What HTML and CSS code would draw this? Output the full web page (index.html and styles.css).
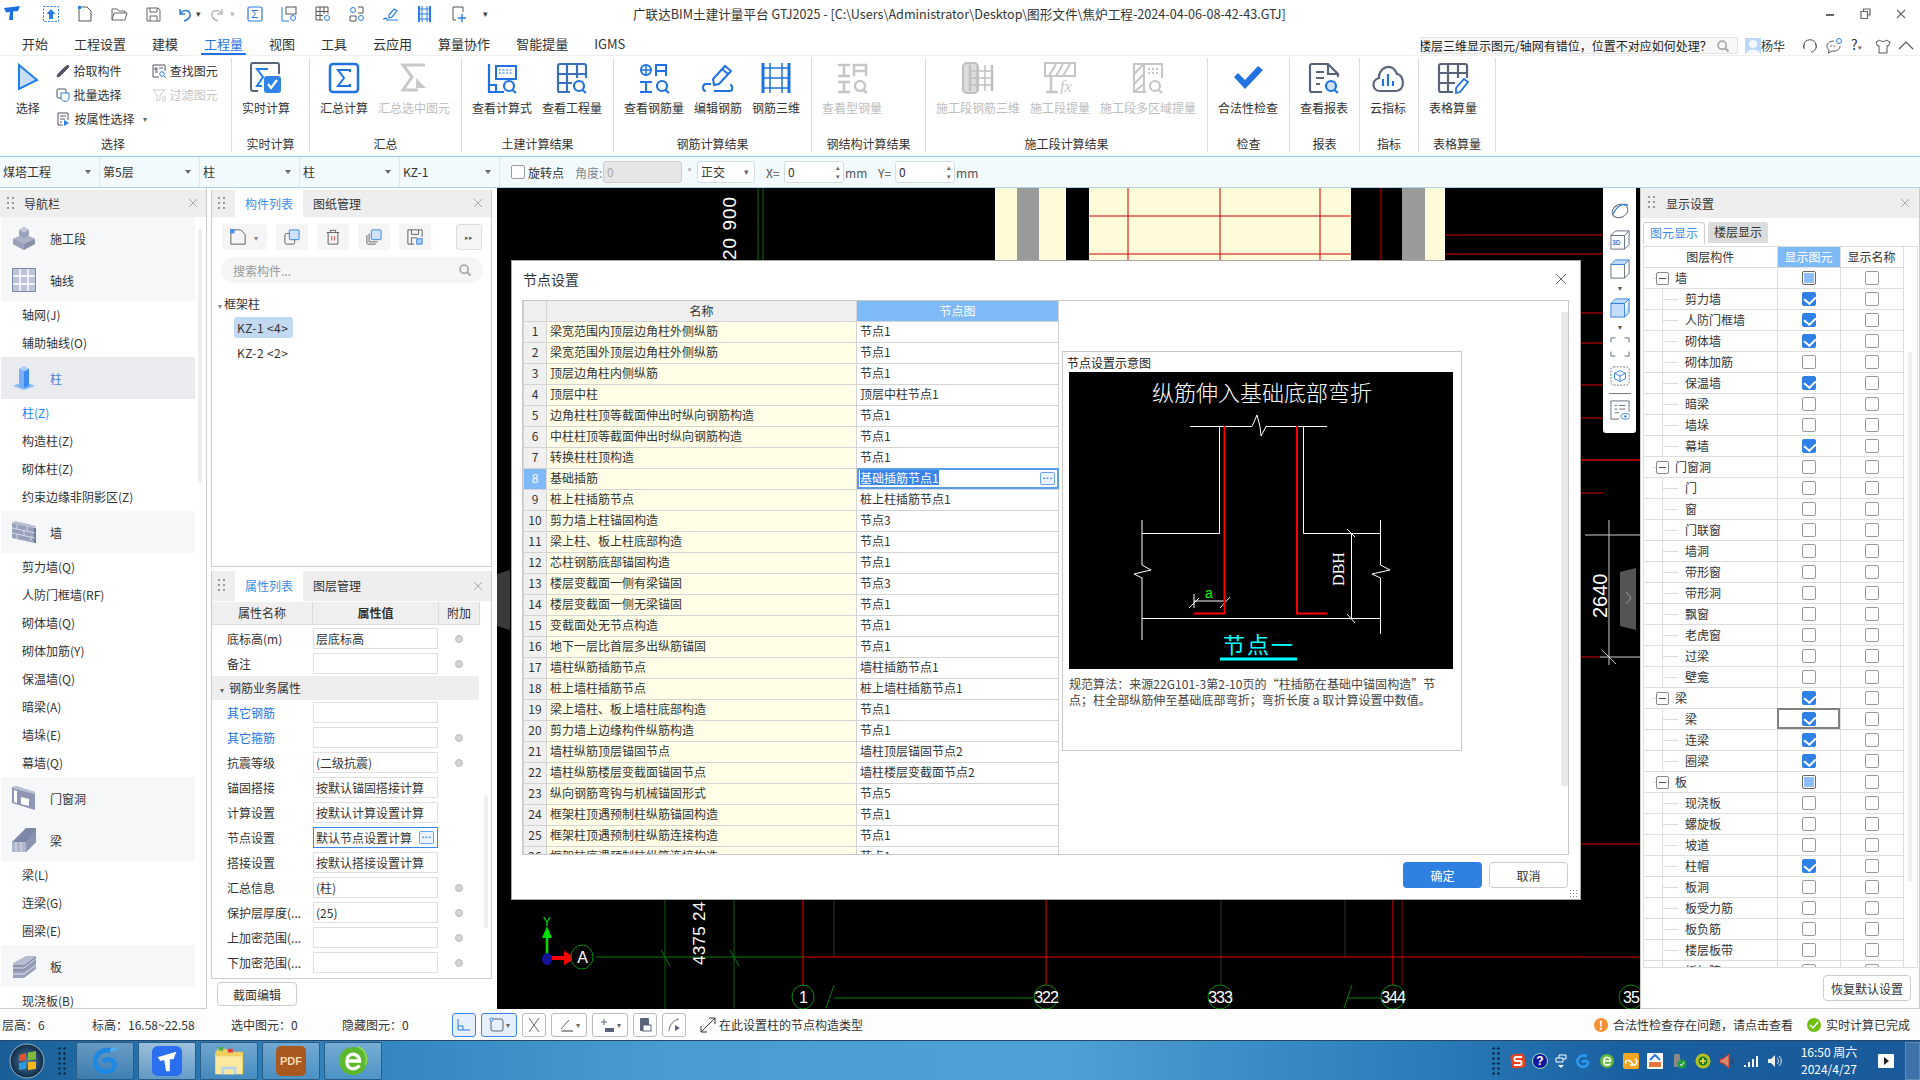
FILE: index.html
```html
<!DOCTYPE html>
<html lang="zh-CN">
<head>
<meta charset="utf-8">
<title>GTJ2025</title>
<link rel="stylesheet" href="styles.css">
</head>
<body>
<svg class="defs" width="0" height="0" aria-hidden="true">
  <symbol id="q" viewBox="0 0 10 10"><circle cx="4.3" cy="4.3" r="3.4" fill="none" stroke="currentColor" stroke-width="1.5"/><path d="M6.8 6.8L9.6 9.6" stroke="currentColor" stroke-width="1.7"/></symbol>
  <symbol id="x" viewBox="0 0 10 10"><path d="M1 1L9 9M9 1L1 9" stroke="#aaa" stroke-width="1"/></symbol>
  <symbol id="grip" viewBox="0 0 8 14"><g fill="#999"><rect x="0" y="0" width="2" height="2"/><rect x="5" y="0" width="2" height="2"/><rect x="0" y="5" width="2" height="2"/><rect x="5" y="5" width="2" height="2"/><rect x="0" y="10" width="2" height="2"/><rect x="5" y="10" width="2" height="2"/></g></symbol>
</svg>
<div class="app">

  <header class="titlebar">
    <svg class="logo" viewBox="0 0 18 18"><path d="M1 3L17 1L15 6L10 6.500L10 15L6 15L7 7L3 7.500Z" fill="#1d6fe0"/></svg>
    <svg class="qa" viewBox="0 0 18 18"><rect x="1.500" y="1.500" width="15" height="15" fill="none" stroke="#2a7de1" stroke-dasharray="2 1.500"/><path d="M9 4L13.500 9H11V14H7V9H4.500Z" fill="#2a7de1"/></svg>
    <svg class="qa" viewBox="0 0 18 18"><path d="M3 2H11L15 6V16H3Z" fill="none" stroke="#555"/><rect x="2" y="1" width="3" height="3" fill="#2a7de1"/></svg>
    <svg class="qa" viewBox="0 0 18 18"><path d="M2 15V4H7L9 6H15V8M2 15L4 8H17L15 15Z" fill="none" stroke="#666"/></svg>
    <svg class="qa qs" viewBox="0 0 18 18"><path d="M3 3H14L16 5V16H3ZM6 3V7H13V3M6 16V11H13V16" fill="none" stroke="#666"/></svg>
    <svg class="qa qu" viewBox="0 0 18 18"><path d="M5 4V9H10M5 9C7 5 14 4 15 9C15.500 13 12 15 9 16" fill="none" stroke="#2a7de1" stroke-width="1.500"/></svg>
    <span class="qarrow">▾</span>
    <svg class="qa qu dis" viewBox="0 0 18 18"><path d="M13 4V9H8M13 9C11 5 4 4 3 9C2.500 13 6 15 9 16" fill="none" stroke="#bbb" stroke-width="1.500"/></svg>
    <span class="qarrow qarrow-g">▾</span>
    <svg class="qa" viewBox="0 0 18 18"><rect x="2" y="2" width="14" height="14" rx="1.500" fill="none" stroke="#2a7de1" stroke-width="1.200"/><path d="M12 5.500H6L9.500 9L6 12.500H12" fill="none" stroke="#2a7de1"/></svg>
    <svg class="qa" viewBox="0 0 18 18"><path d="M2 2V16H9" fill="none" stroke="#2a7de1"/><rect x="6" y="2" width="10" height="7" fill="none" stroke="#555"/><circle cx="13" cy="13" r="2.500" fill="none" stroke="#2a7de1"/></svg>
    <svg class="qa" viewBox="0 0 18 18"><path d="M2 2H14V9M2 2V15H9M2 6.500H14M2 10.500H9M6 2V15M10 2V9" fill="none" stroke="#555"/><circle cx="13" cy="13" r="2.500" fill="none" stroke="#2a7de1"/></svg>
    <svg class="qa" viewBox="0 0 18 18"><path d="M10 2H15V8M10 8H15M2 11H8V16M2 11V16H8" fill="none" stroke="#555"/><circle cx="5" cy="5" r="2.500" fill="none" stroke="#2a7de1"/><circle cx="13" cy="13" r="2.500" fill="none" stroke="#2a7de1"/></svg>
    <svg class="qa" viewBox="0 0 18 18"><path d="M2 15C1 12 6 13 5 15H16M7 10L12 4L15 6L10 12L7 13Z" fill="none" stroke="#2a7de1" stroke-width="1.200"/></svg>
    <svg class="qa" viewBox="0 0 18 18"><path d="M3 1V17M14 1V17" stroke="#2a7de1" stroke-width="2"/><path d="M3 4H14M3 9H14M3 14H14M6 1V17M11 1V17" stroke="#2a7de1" stroke-width="1"/></svg>
    <svg class="qa qf" viewBox="0 0 18 18"><path d="M3 2H13V7M3 2V15H6M3 2" fill="none" stroke="#555"/><path d="M12 9V17M8 13H16" stroke="#2a7de1" stroke-width="1.400"/></svg>
    <span class="qarrow qarrow-m">▾</span>
    <span class="title-text">广联达BIM土建计量平台 GTJ2025 - [C:\Users\Administrator\Desktop\图形文件\焦炉工程-2024-04-06-08-42-43.GTJ]</span>
    <div class="winctl">
      <svg viewBox="0 0 12 12"><rect x="1" y="6" width="8" height="2" fill="#666"/></svg>
      <svg viewBox="0 0 12 12"><path d="M3.500 3.500V1H10V7H7.500M1 3.500H7.500V10.500H1Z" fill="none" stroke="#666" stroke-width="1.200"/></svg>
      <svg viewBox="0 0 12 12"><path d="M2 2L10 10M10 2L2 10" stroke="#666" stroke-width="1.100"/></svg>
    </div>
  </header>

  <nav class="menubar">
    <span class="mi">开始</span><span class="mi">工程设置</span><span class="mi">建模</span><span class="mi mi-on">工程量</span><span class="mi">视图</span><span class="mi">工具</span><span class="mi">云应用</span><span class="mi">算量协作</span><span class="mi">智能提量</span><span class="mi">IGMS</span>
    <div class="menu-right">
      <div class="topsearch"><span class="topsearch-t">楼层三维显示图元/轴网有错位，位置不对应如何处理？</span><svg class="ico-q"><use href="#q"/></svg></div>
      <svg class="avatar" viewBox="0 0 16 16"><rect width="16" height="16" fill="#bcd8f7"/><circle cx="8" cy="6" r="4" fill="#f4f8fd"/><path d="M1 16C2 10 14 10 15 16Z" fill="#f4f8fd"/></svg>
      <span class="uname">杨华</span>
      <svg class="mr-i mr-1" viewBox="0 0 16 16"><path d="M2 10V7C2 0 14 0 14 7V10M3 6C1 6 1 11 3 11M13 6C15 6 15 11 13 11M13 11C13 13 11 14 9 14" fill="none" stroke="#555"/></svg>
      <svg class="mr-i mr-2" viewBox="0 0 16 16"><path d="M8 3C3 3 1 6 1 8C1 10 2 11 3 12L2.500 15L6 13C11 14 14 11 14 8" fill="none" stroke="#555"/><circle cx="5" cy="8" r=".8" fill="#555"/><circle cx="8" cy="8" r=".8" fill="#555"/><circle cx="13" cy="3" r="2.500" fill="none" stroke="#2a7de1"/></svg>
      <span class="help">?<small>▾</small></span>
      <svg class="mr-i mr-3" viewBox="0 0 16 16"><path d="M5 2L1 4L2.500 8L4 7.500V15H12V7.500L13.500 8L15 4L11 2C10 4 6 4 5 2Z" fill="none" stroke="#555"/></svg>
      <svg class="mr-i mr-4" viewBox="0 0 16 16"><path d="M1 11L8 4L15 11" fill="none" stroke="#555" stroke-width="1.200"/></svg>
    </div>
  </nav>

  <section class="ribbon">
    <div class="rg rg-select">
      <div class="rg-body sel">
        <div class="sel-main">
          <svg class="sel-arrow" viewBox="0 0 22 28"><path d="M2 2V26L20 17Z" fill="#c8dffb" stroke="#2080e8" stroke-width="2"/></svg>
          <span>选择</span>
        </div>
        <div class="sel-col">
          <div class="si"><svg viewBox="0 0 14 14"><path d="M12 1L13 3L10 6L8 4ZM8 4L2 10L1 13L4 12L10 6" fill="#556" stroke="#556"/></svg>拾取构件</div>
          <div class="si"><svg viewBox="0 0 14 14"><rect x="1" y="1" width="9" height="9" rx="1" fill="none" stroke="#556"/><path d="M5 5H13V10C13 12 11 13 9 13.500C7 13 5 12 5 10Z" fill="#fff" stroke="#2a7de1"/></svg>批量选择</div>
          <div class="si si-prop"><svg viewBox="0 0 14 14"><path d="M2 1H12V8M2 1V13H7M4 4H10M4 7H9M4 10H6" fill="none" stroke="#556"/><path d="M8 8V14L13 11Z" fill="#2a7de1"/></svg>按属性选择<small>▾</small></div>
        </div>
        <div class="sel-col sel-col2">
          <div class="si"><svg viewBox="0 0 14 14"><path d="M1 1H13V7M1 1V13H7M3 4H5V6H3ZM7 4H11M3 8H6" fill="none" stroke="#556"/><circle cx="10" cy="10" r="2.300" fill="none" stroke="#2a7de1"/><path d="M12 12L14 14" stroke="#2a7de1"/></svg>查找图元</div>
          <div class="si si-dis"><svg viewBox="0 0 14 14"><path d="M1 2H13L8 7V12L5 13V7Z" fill="none" stroke="#ccc"/><path d="M10 9H14M10 11H14M10 13H14" stroke="#ccc"/></svg>过滤图元</div>
        </div>
      </div>
      <div class="rg-label">选择</div>
    </div>

    <div class="rg rg-rt">
      <div class="rg-body">
        <div class="rb"><svg class="ri" viewBox="0 0 32 32"><path d="M8 29H3C2 29 1 28 1 27V3C1 2 2 1 3 1H27C28 1 29 2 29 3V12" fill="none" stroke="#5a6478" stroke-width="2"/><path d="M18 7H7L13 15L7 24H12" fill="none" stroke="#2080e8" stroke-width="2"/><rect x="14" y="14" width="17" height="17" rx="3" fill="#2f86e8"/><path d="M18 22L21 26L27 18" fill="none" stroke="#fff" stroke-width="2.200"/></svg><span>实时计算</span></div>
      </div>
      <div class="rg-label">实时计算</div>
    </div>

    <div class="rg rg-sum">
      <div class="rg-body">
        <div class="rb"><svg class="ri ri-blue" viewBox="0 0 32 32"><rect x="2" y="2" width="28" height="28" rx="3" fill="none" stroke="currentColor" stroke-width="2.500"/><path d="M22 10V8H10L16 16L10 24H22V22" fill="none" stroke="currentColor" stroke-width="2"/></svg><span>汇总计算</span></div>
        <div class="rb dis"><svg class="ri" viewBox="0 0 32 32"><path d="M27 3H5L14 15L5 28H20" fill="none" stroke="#c9c9c9" stroke-width="3"/><path d="M18 16L28 26H18Z" fill="#c9c9c9"/></svg><span>汇总选中图元</span></div>
      </div>
      <div class="rg-label">汇总</div>
    </div>

    <div class="rg rg-civil">
      <div class="rg-body">
        <div class="rb"><svg class="ri" viewBox="0 0 32 32"><path d="M3 2V30H18M3 23H10V30" fill="none" stroke="#1f72e0" stroke-width="2.200"/><rect x="10" y="4" width="20" height="13" fill="none" stroke="#1f72e0" stroke-width="2"/><path d="M13 8H27M13 11H27" stroke="#1f72e0" stroke-dasharray="2 1.500"/><circle cx="23" cy="24" r="5" fill="none" stroke="#1f72e0" stroke-width="2.200"/><path d="M26.500 28L30 31" stroke="#1f72e0" stroke-width="2.200"/></svg><span>查看计算式</span></div>
        <div class="rb"><svg class="ri" viewBox="0 0 32 32"><path d="M14 30H3C2 30 2 29 2 28V4C2 3 3 2 4 2H28C29 2 30 3 30 4V16M2 12H30M2 21H16M11 2V30M21 2V16" fill="none" stroke="#3a6fc0" stroke-width="2.200"/><circle cx="23" cy="24" r="5" fill="none" stroke="#1f72e0" stroke-width="2.200"/><path d="M26.500 28L30 31" stroke="#1f72e0" stroke-width="2.200"/></svg><span>查看工程量</span></div>
      </div>
      <div class="rg-label">土建计算结果</div>
    </div>

    <div class="rg rg-rebar">
      <div class="rg-body">
        <div class="rb"><svg class="ri" viewBox="0 0 32 32"><circle cx="8" cy="8" r="5" fill="none" stroke="#1f72e0" stroke-width="2"/><path d="M3 8H13M8 3V13" stroke="#1f72e0" stroke-width="1.500"/><path d="M18 14V3H28V14M18 9H28" fill="none" stroke="#1f72e0" stroke-width="2"/><path d="M2 30H14M2 20H14M8 20V30" fill="none" stroke="#1f72e0" stroke-width="2"/><circle cx="24" cy="24" r="5" fill="none" stroke="#1f72e0" stroke-width="2.200"/><path d="M27.500 28L31 31" stroke="#1f72e0" stroke-width="2.200"/></svg><span>查看钢筋量</span></div>
        <div class="rb"><svg class="ri" viewBox="0 0 32 32"><path d="M4 30C0 30 0 23 4 23H9M12 30H28C31 30 31 24 28 24" fill="none" stroke="#1f72e0" stroke-width="2" transform="translate(0 -1)"/><path d="M12 23L11 17L23 4L29 9L17 22Z" fill="none" stroke="#1f72e0" stroke-width="2"/><path d="M20 7L26 12" stroke="#1f72e0" stroke-width="2"/></svg><span>编辑钢筋</span></div>
        <div class="rb"><svg class="ri" viewBox="0 0 32 32"><path d="M3 1V31M29 1V31" stroke="#1f72e0" stroke-width="3"/><path d="M3 6H29M3 16H29M3 26H29M10 1V31M22 1V31" stroke="#1f72e0" stroke-width="1.500"/></svg><span>钢筋三维</span></div>
      </div>
      <div class="rg-label">钢筋计算结果</div>
    </div>

    <div class="rg rg-steel">
      <div class="rg-body">
        <div class="rb dis"><svg class="ri" viewBox="0 0 32 32"><path d="M2 3H14M2 14H14M8 3V14M18 14V3H30V14M18 9H30M2 30H14M2 20H14M8 20V30" fill="none" stroke="#c6c6c6" stroke-width="2.500"/><circle cx="24" cy="24" r="5" fill="none" stroke="#c6c6c6" stroke-width="2.500"/><path d="M27.500 28L31 31" stroke="#c6c6c6" stroke-width="2.500"/></svg><span>查看型钢量</span></div>
      </div>
      <div class="rg-label">钢结构计算结果</div>
    </div>

    <div class="rg rg-stage">
      <div class="rg-body">
        <div class="rb dis"><svg class="ri" viewBox="0 0 32 32"><rect x="1" y="1" width="15" height="30" rx="4" fill="#dcdcdc" stroke="#c0c0c0" stroke-width="2"/><path d="M8 3V29M30 3V29" stroke="#c0c0c0" stroke-width="2.500"/><path d="M8 9H30M8 16H30M8 23H30M15 3V29M23 3V29" stroke="#c0c0c0" stroke-width="1.500"/></svg><span>施工段钢筋三维</span></div>
        <div class="rb dis"><svg class="ri" viewBox="0 0 32 32"><rect x="1" y="1" width="30" height="13" fill="none" stroke="#c6c6c6" stroke-width="2"/><path d="M5 14L12 2M12 14L19 2M19 14L26 2" stroke="#c6c6c6" stroke-width="2"/><path d="M7 14V29M2 30H14" stroke="#c6c6c6" stroke-width="2.500"/><text x="16" y="30" class="fx">fx</text></svg><span>施工段提量</span></div>
        <div class="rb dis"><svg class="ri" viewBox="0 0 32 32"><path d="M14 30H2V2H30V16M12 2V30M2 12L12 2M2 22L12 12M2 30L12 22" fill="none" stroke="#c6c6c6" stroke-width="2"/><path d="M16 7H28M16 11H28" stroke="#c6c6c6" stroke-width="2" stroke-dasharray="2 2"/><circle cx="23" cy="24" r="5" fill="none" stroke="#c6c6c6" stroke-width="2.200"/><path d="M26.500 28L30 31" stroke="#c6c6c6" stroke-width="2.200"/></svg><span>施工段多区域提量</span></div>
      </div>
      <div class="rg-label">施工段计算结果</div>
    </div>

    <div class="rg rg-check">
      <div class="rg-body">
        <div class="rb"><svg class="ri" viewBox="0 0 32 32"><path d="M2 15L6 11L13 18L26 4L31 8L13 27Z" fill="#1f72e0"/></svg><span>合法性检查</span></div>
      </div>
      <div class="rg-label">检查</div>
    </div>

    <div class="rg rg-report">
      <div class="rg-body">
        <div class="rb"><svg class="ri" viewBox="0 0 32 32"><path d="M14 30H4C3 30 2 29 2 28V4C2 3 3 2 4 2H20L30 12V15M20 2V12H30M8 10H16M8 16H16M8 22H12" fill="none" stroke="#5a6478" stroke-width="2.200"/><circle cx="23" cy="24" r="5" fill="#cfe2fb" stroke="#1f72e0" stroke-width="2.200"/><path d="M26.500 28L30 31" stroke="#1f72e0" stroke-width="2.200"/></svg><span>查看报表</span></div>
      </div>
      <div class="rg-label">报表</div>
    </div>

    <div class="rg rg-idx">
      <div class="rg-body">
        <div class="rb"><svg class="ri" viewBox="0 0 32 32"><path d="M8 29C0 29 -1 18 7 16C6 6 20 -1 25 12C33 13 33 29 24 29Z" fill="none" stroke="#5a6478" stroke-width="2.200"/><path d="M11 17V24M16 12V24M21 19V24" stroke="#1f72e0" stroke-width="2.200"/></svg><span>云指标</span></div>
      </div>
      <div class="rg-label">指标</div>
    </div>

    <div class="rg rg-table">
      <div class="rg-body">
        <div class="rb"><svg class="ri" viewBox="0 0 32 32"><path d="M16 30H4C3 30 2 29 2 28V4C2 3 3 2 4 2H28C29 2 30 3 30 4V16M2 11H30M2 21H18M11 2V30M21 2V16" fill="none" stroke="#5a6478" stroke-width="2.200"/><path d="M19 31V26L27 17L31 20L23 30Z" fill="none" stroke="#1f72e0" stroke-width="1.800"/></svg><span>表格算量</span></div>
      </div>
      <div class="rg-label">表格算量</div>
    </div>
  </section>

  <section class="optbar">
    <div class="dd">煤塔工程</div><div class="dd">第5层</div><div class="dd">柱</div><div class="dd">柱</div><div class="dd">KZ-1</div>
    <span class="chk"></span><span class="opt-t">旋转点</span><span class="opt-dis">角度:</span>
    <span class="inp inp-dis">0</span><span class="deg">°</span>
    <span class="sel-box">正交<small>▾</small></span>
    <span class="opt-x">X=</span><span class="inp inp-n">0<i class="spin">▴<br>▾</i></span><span class="opt-mm">mm</span>
    <span class="opt-y">Y=</span><span class="inp inp-n">0<i class="spin">▴<br>▾</i></span><span class="opt-mm">mm</span>
  </section>

  <main class="main">
    <aside class="nav">
      <div class="phead"><svg class="grip"><use href="#grip"/></svg><span class="phead-t">导航栏</span><svg class="pclose"><use href="#x"/></svg></div>
      <div class="nav-track"></div>
      <div class="nv-h"><svg viewBox="0 0 24 24"><path d="M12 8L23 13V18L12 24L1 18V13Z" fill="#8890aa"/><path d="M12 8L23 13L12 18L1 13Z" fill="#aeb4c8"/><path d="M12 18V24L1 18V13Z" fill="#9aa1b9"/><path d="M12 1L17 4V9L12 12L7 9V4Z" fill="#9aa1b9"/><path d="M12 1L17 4L12 6.500L7 4Z" fill="#c3c8d8"/></svg>施工段</div>
      <div class="nv-h"><svg viewBox="0 0 24 24"><rect width="24" height="24" fill="#7c87ad"/><rect x="1" y="1" width="22" height="22" fill="#bdc3d8"/><path d="M8 1V23M16 1V23M1 8H23M1 16H23" stroke="#fff" stroke-width="1.500"/></svg>轴线</div>
      <div class="nv-s">轴网(J)</div>
      <div class="nv-s">辅助轴线(O)</div>
      <div class="nv-h nv-h-on"><svg viewBox="0 0 24 24"><path d="M1 20L12 15L23 20L12 24Z" fill="#8bbcf5"/><path d="M7 3L12 0.500L17 3V20L12 22L7 20Z" fill="#3b8aef"/><path d="M7 3L12 5.500V22L7 20Z" fill="#78b0f6"/><path d="M7 3L12 0.500L17 3L12 5.500Z" fill="#a9cefa"/></svg><span>柱</span></div>
      <div class="nv-s nv-s-on">柱(Z)</div>
      <div class="nv-s">构造柱(Z)</div>
      <div class="nv-s">砌体柱(Z)</div>
      <div class="nv-s">约束边缘非阴影区(Z)</div>
      <div class="nv-h"><svg viewBox="0 0 24 24"><path d="M0 3L23 8V23L0 18Z" fill="#98a0ba"/><path d="M23 8V23" stroke="#6f7896" stroke-width="2"/><path d="M0 3L3 1L24 6L23 8Z" fill="#b8bdd0"/><path d="M0 8L23 13M0 13L23 18M5 4V9M12 10V15M5 14V19M15 6V11M19 16V21" stroke="#d4d8e4"/></svg>墙</div>
      <div class="nv-s">剪力墙(Q)</div>
      <div class="nv-s">人防门框墙(RF)</div>
      <div class="nv-s">砌体墙(Q)</div>
      <div class="nv-s">砌体加筋(Y)</div>
      <div class="nv-s">保温墙(Q)</div>
      <div class="nv-s">暗梁(A)</div>
      <div class="nv-s">墙垛(E)</div>
      <div class="nv-s">幕墙(Q)</div>
      <div class="nv-h"><svg viewBox="0 0 24 24"><path d="M0 1L4 0L23 6V24L0 17Z" fill="#8f97b4"/><path d="M5 5L5 17L2 16V4ZM9 11L17 13V20L9 18Z" fill="#fff"/><path d="M1 1L23 7" stroke="#c2c7d8" stroke-width="2"/></svg>门窗洞</div>
      <div class="nv-h"><svg viewBox="0 0 24 24"><path d="M0 14L14 0H24V14L14 24H0Z" fill="#7d87a8"/><path d="M0 14H14V24H0Z" fill="#b0b6ca"/><path d="M14 14L24 2V14L14 24Z" fill="#8b94b0"/><path d="M4 14V24M9 14V24" stroke="#dde"/></svg>梁</div>
      <div class="nv-s">梁(L)</div>
      <div class="nv-s">连梁(G)</div>
      <div class="nv-s">圈梁(E)</div>
      <div class="nv-h"><svg viewBox="0 0 24 24"><path d="M1 9L14 2H24L12 11H1Z" fill="#b7bdcf"/><path d="M1 11H12L24 2V9L12 18H1Z" fill="#8d95ae"/><path d="M1 17H12L24 8V15L12 24H1Z" fill="#9aa1b9"/><path d="M1 14H12L24 5M1 20H12L24 11" stroke="#dde2ee" fill="none"/></svg>板</div>
      <div class="nv-s">现浇板(B)</div>
    </aside>

    <div class="midcol">
      <section class="panel panel-list">
        <div class="phead"><svg class="grip"><use href="#grip"/></svg><span class="tab tab-on">构件列表</span><span class="tab">图纸管理</span><svg class="pclose"><use href="#x"/></svg></div>
        <div class="ltool">
          <span class="tb tb-new"><svg viewBox="0 0 18 18"><path d="M1 1H12L17 6V17H1Z" fill="none" stroke="#555"/><rect x="0" y="0" width="5" height="5" fill="#4c8df0"/></svg><i class="tb-dd">▾</i></span>
          <span class="tb"><svg viewBox="0 0 18 18"><rect x="1" y="5" width="11" height="12" rx="2" fill="none" stroke="#555"/><rect x="6" y="1" width="11" height="11" rx="1" fill="#cfe2fb" stroke="#2a7de1"/></svg></span>
          <span class="tb"><svg viewBox="0 0 18 18"><path d="M2 4H16M6 4V1.500H12V4M3.500 4V17H14.500V4" fill="none" stroke="#555"/><path d="M7.500 8V13M10.500 8V13" stroke="#e33"/></svg></span>
          <span class="tb"><svg viewBox="0 0 18 18"><path d="M1 7V16C1 16.500 2 17 2 17H11M3.500 5V14.500H13" fill="none" stroke="#555"/><rect x="6" y="1" width="11" height="11" rx="1" fill="#cfe2fb" stroke="#2a7de1"/></svg></span>
          <span class="tb"><svg viewBox="0 0 18 18"><path d="M8 17H1V1H17V9M5 1V6H13V1M5 17V10H11" fill="none" stroke="#555"/><rect x="11" y="11" width="6" height="6" fill="#a7ccf8" stroke="#2a7de1"/></svg></span>
          <span class="tb tb-more"><small>▸▸</small></span>
        </div>
        <div class="lsearch"><span>搜索构件...</span><svg class="ico-q"><use href="#q"/></svg></div>
        <div class="tree-h"><small>▾</small>框架柱</div>
        <div class="tree-i"><span class="tree-sel">KZ-1 &lt;4&gt;</span></div>
        <div class="tree-i"><span>KZ-2 &lt;2&gt;</span></div>
      </section>

      <section class="panel panel-prop">
        <div class="phead phead-p"><svg class="grip"><use href="#grip"/></svg><span class="tab tab-on">属性列表</span><span class="tab">图层管理</span><svg class="pclose"><use href="#x"/></svg></div>
        <div class="pr-head"><span class="pc1">属性名称</span><span class="pc2">属性值</span><span class="pc3">附加</span></div>
        <div class="pr"><span class="pl">底标高(m)</span><span class="pv">层底标高</span><i class="rd"></i></div>
        <div class="pr"><span class="pl">备注</span><span class="pv"></span><i class="rd"></i></div>
        <div class="pr-grp"><small>▾</small>钢筋业务属性</div>
        <div class="pr"><span class="pl pl-b">其它钢筋</span><span class="pv"></span></div>
        <div class="pr"><span class="pl pl-b">其它箍筋</span><span class="pv"></span><i class="rd"></i></div>
        <div class="pr"><span class="pl">抗震等级</span><span class="pv">(二级抗震)</span><i class="rd"></i></div>
        <div class="pr"><span class="pl">锚固搭接</span><span class="pv">按默认锚固搭接计算</span></div>
        <div class="pr"><span class="pl">计算设置</span><span class="pv">按默认计算设置计算</span></div>
        <div class="pr"><span class="pl">节点设置</span><span class="pv pv-on">默认节点设置计算<b class="more">•••</b></span></div>
        <div class="pr"><span class="pl">搭接设置</span><span class="pv">按默认搭接设置计算</span></div>
        <div class="pr"><span class="pl">汇总信息</span><span class="pv">(柱)</span><i class="rd"></i></div>
        <div class="pr"><span class="pl">保护层厚度(...</span><span class="pv">(25)</span><i class="rd"></i></div>
        <div class="pr"><span class="pl">上加密范围(...</span><span class="pv"></span><i class="rd"></i></div>
        <div class="pr"><span class="pl">下加密范围(...</span><span class="pv"></span><i class="rd"></i></div>
        <div class="pr-track"></div>
      </section>
      <button class="btn-sec">截面编辑</button>
    </div>

    <div class="canvas">
      <svg class="cad" viewBox="497 188 1143 821">
        <rect x="497" y="188" width="1143" height="821" fill="#000"/>
        <g fill="#fdfbd8">
          <rect x="995" y="188" width="23" height="80"/><rect x="1039" y="188" width="27" height="80"/>
          <rect x="1089" y="188" width="262" height="80"/><rect x="1425" y="188" width="20" height="80"/>
        </g>
        <g fill="#9a9a9a"><rect x="1017" y="188" width="22" height="80"/><rect x="1402" y="188" width="23" height="80"/></g>
        <g stroke="#c00" stroke-width="1">
          <path d="M1128 188V262M1220 188V262M1320 188V262M1381 188V262"/>
          <path d="M1089 216H1351M1089 254H1351"/>
        </g>
        <path d="M758 188V262" stroke="#0a6e0a"/>
        <path d="M763 188V262" stroke="#0a6e0a"/>
        <text class="cad-num" transform="translate(736 260) rotate(-90)">20 900</text>
        <g stroke="#d00" stroke-width="1">
          <path d="M1445 235H1603M1445 254H1603M1581 313H1603M1581 343H1603M1581 385H1603M1581 418H1603M1581 493H1603"/>
          <path d="M1581 844H1640M1581 957H1640"/>
          <path d="M1581 657H1600"/>
        </g>
        <path d="M1581 460H1640" stroke="#900" stroke-width="2"/>
        <path d="M1609 520V665M1585 535H1640M1600 657H1640M1602 650L1616 664" stroke="#ccc"/>
        <text class="cad-num2" transform="translate(1607 618) rotate(-90)">2640</text>

        <path d="M665 900V1009M734 900V1009" stroke="#0a5e0a"/>
        <path d="M834 900V957M1221 900V985M1345 900V957" stroke="#333"/>
        <path d="M803 900V985M1046 900V985M1393 900V985" stroke="#e00"/>
        <path d="M1402 900V985" stroke="#900"/>
        <path d="M596 957H803" stroke="#0a7a0a"/>
        <path d="M803 957H1581" stroke="#e00"/>
        <path d="M661 950L670 966M730 950L739 966" stroke="#0a7a0a"/>
        <text class="cad-num3" transform="translate(705 965) rotate(-90)">4375 24</text>
        <path d="M834 998H1033M1347 998H1385M834 985L826 1008M1352 985L1344 1008" stroke="#0a7a0a" fill="none"/>
        <path d="M547 958V935" stroke="#0d0" stroke-width="2.500"/>
        <path d="M542 938L547 926L552 938Z" fill="#0d0"/>
        <path d="M550 958H566" stroke="#f00" stroke-width="4"/>
        <path d="M564 951L576 958L564 965Z" fill="#f00"/>
        <ellipse cx="547" cy="959" rx="5" ry="6" fill="#12129a"/>
        <text class="cad-y" x="547" y="926">Y</text>
        <g fill="#000" stroke="#0a8a0a">
          <ellipse cx="582" cy="957" rx="11" ry="12"/>
          <ellipse cx="803" cy="997" rx="11" ry="12"/>
          <ellipse cx="1046" cy="997" rx="12" ry="12"/>
          <ellipse cx="1220" cy="997" rx="12" ry="12"/>
          <ellipse cx="1393" cy="997" rx="12" ry="12"/>
          <ellipse cx="1631" cy="997" rx="12" ry="12"/>
        </g>
        <g class="bub">
          <text x="582" y="963">A</text><text x="803" y="1003">1</text><text x="1046" y="1003">322</text><text x="1220" y="1003">333</text><text x="1393" y="1003">344</text><text x="1631" y="1003">35</text>
        </g>
        <path d="M497 574L510 570V630L497 626Z" fill="#3a3a3a"/>
        <path d="M1620 572L1636 568V630L1620 626Z" fill="#555"/>
        <path d="M1626 592L1631 598L1626 604" fill="none" stroke="#999"/>
      </svg>

      <div class="vtool">
        <svg viewBox="0 0 22 22"><ellipse cx="11" cy="11" rx="9" ry="7" fill="none" stroke="#5a6478" transform="rotate(-25 11 11)"/><path d="M3 15C8 4 16 2 20 5" fill="none" stroke="#2a7de1" stroke-width="1.300"/></svg>
        <svg viewBox="0 0 22 22"><path d="M1 6H16V21H1ZM1 6L6 1H21V16L16 21M16 6L21 1" fill="none" stroke="#5a6478"/><text x="2.500" y="17" class="v3d">3D</text></svg>
        <svg viewBox="0 0 22 22"><path d="M1 6H16V21H1ZM16 21L21 16V1" fill="none" stroke="#5a6478"/><path d="M1 6L6 1H21L16 6Z" fill="#c5dcfb" stroke="#2a7de1"/></svg>
        <i class="vt-arrow">▾</i>
        <svg viewBox="0 0 22 22"><path d="M1 6H16V21H1ZM16 21L21 16V1M1 6L6 1H21L16 6Z" fill="#c5dcfb" stroke="#2a7de1"/></svg>
        <i class="vt-arrow">▾</i>
        <svg viewBox="0 0 22 22"><path d="M1 6V1H6M16 1H21V6M1 16V21H6M16 21H21V16" fill="none" stroke="#5a6478"/></svg>
        <svg viewBox="0 0 22 22"><rect x="1" y="1" width="20" height="20" rx="3" fill="none" stroke="#5a6478" stroke-dasharray="2 1.500"/><path d="M11 5L17 8V14L11 17L5 14V8ZM5 8L11 11L17 8M11 11V17" fill="none" stroke="#2a7de1"/></svg>
        <i class="vt-line"></i>
        <svg viewBox="0 0 22 22"><path d="M10 21H1V1H21V13M5 6H8M10 6H17M5 10H8M10 10H17M5 14H10" fill="none" stroke="#5a6478"/><ellipse cx="17" cy="18" rx="5" ry="3" fill="none" stroke="#2a7de1"/><circle cx="17" cy="18" r="1.300" fill="#2a7de1"/></svg>
      </div>
    </div>

    <aside class="disp">
      <div class="phead phead-d"><svg class="grip"><use href="#grip"/></svg><span class="phead-t phead-t2">显示设置</span><svg class="pclose"><use href="#x"/></svg></div>
      <div class="dtabs"><span class="dtab dtab-on">图元显示</span><span class="dtab">楼层显示</span></div>
      <div class="dframe">
        <table class="dt">
          <thead><tr><th>图层构件</th><th class="th-on">显示图元</th><th>显示名称</th></tr></thead>
          <tbody>
            <tr><td class="t-p"><i class="minus"></i>墙</td><td><i class="cb pt"></i></td><td><i class="cb"></i></td></tr>
            <tr><td class="t-c">剪力墙</td><td><i class="cb on"></i></td><td><i class="cb"></i></td></tr>
            <tr><td class="t-c">人防门框墙</td><td><i class="cb on"></i></td><td><i class="cb"></i></td></tr>
            <tr><td class="t-c">砌体墙</td><td><i class="cb on"></i></td><td><i class="cb"></i></td></tr>
            <tr><td class="t-c">砌体加筋</td><td><i class="cb"></i></td><td><i class="cb"></i></td></tr>
            <tr><td class="t-c">保温墙</td><td><i class="cb on"></i></td><td><i class="cb"></i></td></tr>
            <tr><td class="t-c">暗梁</td><td><i class="cb"></i></td><td><i class="cb"></i></td></tr>
            <tr><td class="t-c">墙垛</td><td><i class="cb"></i></td><td><i class="cb"></i></td></tr>
            <tr><td class="t-c">幕墙</td><td><i class="cb on"></i></td><td><i class="cb"></i></td></tr>
            <tr><td class="t-p"><i class="minus"></i>门窗洞</td><td><i class="cb"></i></td><td><i class="cb"></i></td></tr>
            <tr><td class="t-c">门</td><td><i class="cb"></i></td><td><i class="cb"></i></td></tr>
            <tr><td class="t-c">窗</td><td><i class="cb"></i></td><td><i class="cb"></i></td></tr>
            <tr><td class="t-c">门联窗</td><td><i class="cb"></i></td><td><i class="cb"></i></td></tr>
            <tr><td class="t-c">墙洞</td><td><i class="cb"></i></td><td><i class="cb"></i></td></tr>
            <tr><td class="t-c">带形窗</td><td><i class="cb"></i></td><td><i class="cb"></i></td></tr>
            <tr><td class="t-c">带形洞</td><td><i class="cb"></i></td><td><i class="cb"></i></td></tr>
            <tr><td class="t-c">飘窗</td><td><i class="cb"></i></td><td><i class="cb"></i></td></tr>
            <tr><td class="t-c">老虎窗</td><td><i class="cb"></i></td><td><i class="cb"></i></td></tr>
            <tr><td class="t-c">过梁</td><td><i class="cb"></i></td><td><i class="cb"></i></td></tr>
            <tr><td class="t-c">壁龛</td><td><i class="cb"></i></td><td><i class="cb"></i></td></tr>
            <tr><td class="t-p"><i class="minus"></i>梁</td><td><i class="cb on"></i></td><td><i class="cb"></i></td></tr>
            <tr><td class="t-c">梁</td><td class="td-focus"><i class="cb on"></i></td><td><i class="cb"></i></td></tr>
            <tr><td class="t-c">连梁</td><td><i class="cb on"></i></td><td><i class="cb"></i></td></tr>
            <tr><td class="t-c">圈梁</td><td><i class="cb on"></i></td><td><i class="cb"></i></td></tr>
            <tr><td class="t-p"><i class="minus"></i>板</td><td><i class="cb pt"></i></td><td><i class="cb"></i></td></tr>
            <tr><td class="t-c">现浇板</td><td><i class="cb"></i></td><td><i class="cb"></i></td></tr>
            <tr><td class="t-c">螺旋板</td><td><i class="cb"></i></td><td><i class="cb"></i></td></tr>
            <tr><td class="t-c">坡道</td><td><i class="cb"></i></td><td><i class="cb"></i></td></tr>
            <tr><td class="t-c">柱帽</td><td><i class="cb on"></i></td><td><i class="cb"></i></td></tr>
            <tr><td class="t-c">板洞</td><td><i class="cb"></i></td><td><i class="cb"></i></td></tr>
            <tr><td class="t-c">板受力筋</td><td><i class="cb"></i></td><td><i class="cb"></i></td></tr>
            <tr><td class="t-c">板负筋</td><td><i class="cb"></i></td><td><i class="cb"></i></td></tr>
            <tr><td class="t-c">楼层板带</td><td><i class="cb"></i></td><td><i class="cb"></i></td></tr>
            <tr><td class="t-c">板加腋</td><td><i class="cb"></i></td><td><i class="cb"></i></td></tr>
          </tbody>
        </table>
        <div class="d-track"></div>
      </div>
      <div class="d-foot"><button class="btn-sec">恢复默认设置</button></div>
    </aside>
  </main>

  <footer class="status">
    <span class="st st1">层高：6</span><span class="st st2">标高：16.58~22.58</span><span class="st st3">选中图元：0</span><span class="st st4">隐藏图元：0</span>
    <span class="sb sb-on sb-s"><svg viewBox="0 0 16 16"><path d="M2 2V13H14M2 9H7V13" fill="none" stroke="#2a7de1"/></svg></span>
    <span class="sb sb-on sb-w"><svg viewBox="0 0 16 16"><rect x="2" y="2" width="12" height="12" rx="2" fill="none" stroke="#5a6478"/><circle cx="2.500" cy="2.500" r="1.500" fill="#fff" stroke="#2a7de1"/></svg><small>▾</small></span>
    <span class="sb sb-s"><svg viewBox="0 0 16 16"><path d="M3 1L13 15M13 1L3 15" stroke="#5a6478" fill="none"/></svg></span>
    <span class="sb sb-w"><svg viewBox="0 0 16 16"><path d="M2 14H14M2 12L10 3" fill="none" stroke="#5a6478"/><path d="M4 14H14" stroke="#999" stroke-width="2"/></svg><small>▾</small></span>
    <span class="sb sb-w"><svg viewBox="0 0 16 16"><path d="M4 2V8M1 5H7" stroke="#5a6478"/><rect x="5" y="11" width="9" height="4" fill="#5a6478"/></svg><small>▾</small></span>
    <span class="sb sb-s"><svg viewBox="0 0 16 16"><rect x="3" y="1" width="9" height="13" rx="1" fill="#5a6478"/><rect x="6" y="8" width="8" height="6" fill="#fff" stroke="#5a6478"/></svg></span>
    <span class="sb sb-s"><svg viewBox="0 0 16 16"><path d="M3 14C3 8 8 3 13 2" fill="none" stroke="#5a6478"/><path d="M9 8V14L14 11Z" fill="#5a6478"/></svg></span>
    <svg class="st-exp" viewBox="0 0 16 16"><path d="M1 15L15 1M9 1H15V7M1 9V15H7" fill="none" stroke="#333"/></svg>
    <span class="st st5">在此设置柱的节点构造类型</span>
    <span class="st-r st-warn"><i class="dot dot-o">!</i>合法性检查存在问题，请点击查看</span>
    <span class="st-r st-ok"><i class="dot dot-g"><svg viewBox="0 0 14 14"><path d="M3 7L6 10L11 4" fill="none" stroke="#fff" stroke-width="1.500"/></svg></i>实时计算已完成</span>
  </footer>

  <footer class="taskbar">
    <span class="orb"><svg viewBox="0 0 36 36"><defs><radialGradient id="og"><stop offset="0" stop-color="#4f7fa8"/><stop offset="1" stop-color="#0f2a44"/></radialGradient></defs><circle cx="18" cy="18" r="17" fill="url(#og)" stroke="#9bb5c9"/><path d="M10 12L17 10V17L10 18Z" fill="#e5532d"/><path d="M19 9.500L27 8V16.500L19 17Z" fill="#7fba3a"/><path d="M10 20L17 19V26L10 27Z" fill="#2c9be0"/><path d="M19 19L27 18.500V26L19 27Z" fill="#f5b81e"/></svg></span>
    <span class="tk-dots"></span>
    <span class="tk"><svg viewBox="0 0 32 32"><path d="M22 5C10 2 4 12 6 20C9 29 23 30 26 22C28 15 18 12 14 17" fill="none" stroke="#1e88e5" stroke-width="5"/><path d="M22 5L29 2" stroke="#4fb0f0" stroke-width="3"/></svg></span>
    <span class="tk tk-a"><svg viewBox="0 0 32 32"><rect width="32" height="32" rx="6" fill="#2a6ff0"/><path d="M6 12L26 6L23 14L19 14V27H15L13 15L9 16Z" fill="#fff"/></svg></span>
    <span class="tk"><svg viewBox="0 0 32 32"><path d="M1 8L4 3H13L15 6H31V30H1Z" fill="#f0d060"/><rect x="2" y="11" width="28" height="19" fill="#fbe9a0"/><path d="M8 22H24V30H8Z" fill="#b7d4ea"/><path d="M11 25H21V30H11Z" fill="#fbe9a0"/><rect x="5" y="1" width="5" height="4" fill="#4caf50"/><rect x="15" y="3" width="5" height="4" fill="#e53935"/></svg></span>
    <span class="tk"><span class="pdf">PDF</span></span>
    <span class="tk"><svg viewBox="0 0 32 32"><circle cx="16" cy="16" r="15" fill="#5cb82c"/><path d="M9 16H23C23 10 17 8 14 9C8 11 8 22 14 24C18 25 21 23 23 21" fill="none" stroke="#fff" stroke-width="3.500"/><path d="M21 1C30 3 32 14 29 20" fill="none" stroke="#8cd45c" stroke-width="2"/></svg></span>
    <div class="tray">
      <span class="tray-dots"></span>
      <svg class="ti ti-s" viewBox="0 0 16 16"><rect x="1" y="1" width="14" height="14" rx="3" fill="#e8431f" transform="rotate(-8 8 8)"/><path d="M12 4H6C4 4 4 8 6 8H10C12 8 12 12 10 12H4" fill="none" stroke="#fff" stroke-width="2"/></svg>
      <svg class="ti ti-h" viewBox="0 0 16 16"><circle cx="8" cy="8" r="7.500" fill="#12189c" stroke="#9db"/><text x="8" y="12" class="tq">?</text></svg>
      <svg class="ti ti-w" viewBox="0 0 16 16"><path d="M5 5V2H12V6H9M2 5H9V9H2Z" fill="none" stroke="#fff"/><path d="M4 12H10L7 15Z" fill="#fff"/></svg>
      <svg class="ti" viewBox="0 0 16 16"><path d="M12 3C5 1 1 6 3 11C6 15 12 15 13 10C13 8 9 7 7 9" fill="none" stroke="#2b9af3" stroke-width="2.500"/></svg>
      <svg class="ti" viewBox="0 0 16 16"><circle cx="8" cy="8" r="7" fill="#62b93a"/><path d="M4.500 8H11.500C11.500 5 9 4 7 4.500C4 5.500 4 11 7 12C9 12.500 10.500 11.500 11.500 10.500" fill="none" stroke="#fff" stroke-width="1.600"/></svg>
      <svg class="ti" viewBox="0 0 16 16"><rect width="16" height="16" rx="2" fill="#f5a623"/><path d="M3 11C1 8 6 6 7 8L10 11M12 6C15 7 14 12 11 12H7" fill="none" stroke="#fff" stroke-width="1.500"/></svg>
      <svg class="ti" viewBox="0 0 16 16"><rect width="16" height="16" rx="1" fill="#fff"/><path d="M3 7L8 2L13 7" fill="none" stroke="#2a7de1" stroke-width="2"/><rect x="2" y="9" width="12" height="5" fill="#e8743b"/></svg>
      <svg class="ti" viewBox="0 0 16 16"><rect x="3" y="1" width="6" height="13" rx="1" fill="#888"/><circle cx="11" cy="11" r="4.500" fill="#1f9a3d"/><path d="M9 11L10.500 13L13 9" fill="none" stroke="#fff"/></svg>
      <svg class="ti" viewBox="0 0 16 16"><circle cx="8" cy="8" r="7.500" fill="#b9c21c"/><circle cx="8" cy="8" r="4.500" fill="#1c7a2e"/><path d="M5 8H11M8 5V11" stroke="#ffe14d" stroke-width="1.500"/></svg>
      <svg class="ti" viewBox="0 0 16 16"><path d="M1 6H4L10 1V15L4 10H1Z" fill="#d98a6a" stroke="#c33"/><path d="M12 5C14 7 14 9 12 11" stroke="#333" fill="none"/></svg>
      <svg class="ti" viewBox="0 0 16 16"><path d="M1 12H3V14H1ZM5 9H7V14H5ZM9 6H11V14H9ZM13 3H15V14H13Z" fill="#fff"/></svg>
      <svg class="ti" viewBox="0 0 16 16"><path d="M1 6H4L8 2V14L4 10H1Z" fill="#eee"/><path d="M10 5C12 7 12 9 10 11M12 3C15 6 15 10 12 13" stroke="#eee" fill="none"/></svg>
      <div class="clock"><span>16:50 周六</span><span>2024/4/27</span></div>
      <span class="actbtn"><i></i></span>
      <span class="showdesk"></span>
    </div>
  </footer>

  <section class="dialog">
    <div class="dlg-title"><span>节点设置</span><svg class="dlg-x" viewBox="0 0 12 12"><path d="M1 1L11 11M11 1L1 11" stroke="#666"/></svg></div>
    <div class="dlg-frame">
      <table class="nt">
        <thead><tr><th class="n"></th><th>名称</th><th class="th-blue">节点图</th></tr></thead>
        <tbody>
          <tr><td class="n">1</td><td class="na">梁宽范围内顶层边角柱外侧纵筋</td><td>节点1</td></tr>
          <tr><td class="n">2</td><td class="na">梁宽范围外顶层边角柱外侧纵筋</td><td>节点1</td></tr>
          <tr><td class="n">3</td><td class="na">顶层边角柱内侧纵筋</td><td>节点1</td></tr>
          <tr><td class="n">4</td><td class="na">顶层中柱</td><td>顶层中柱节点1</td></tr>
          <tr><td class="n">5</td><td class="na">边角柱柱顶等截面伸出时纵向钢筋构造</td><td>节点1</td></tr>
          <tr><td class="n">6</td><td class="na">中柱柱顶等截面伸出时纵向钢筋构造</td><td>节点1</td></tr>
          <tr><td class="n">7</td><td class="na">转换柱柱顶构造</td><td>节点1</td></tr>
          <tr><td class="n n-on">8</td><td class="na">基础插筋</td><td class="val-on"><span class="selected">基础插筋节点1</span><b class="more">•••</b></td></tr>
          <tr><td class="n">9</td><td class="na">桩上柱插筋节点</td><td>桩上柱插筋节点1</td></tr>
          <tr><td class="n">10</td><td class="na">剪力墙上柱锚固构造</td><td>节点3</td></tr>
          <tr><td class="n">11</td><td class="na">梁上柱、板上柱底部构造</td><td>节点1</td></tr>
          <tr><td class="n">12</td><td class="na">芯柱钢筋底部锚固构造</td><td>节点1</td></tr>
          <tr><td class="n">13</td><td class="na">楼层变截面一侧有梁锚固</td><td>节点3</td></tr>
          <tr><td class="n">14</td><td class="na">楼层变截面一侧无梁锚固</td><td>节点1</td></tr>
          <tr><td class="n">15</td><td class="na">变截面处无节点构造</td><td>节点1</td></tr>
          <tr><td class="n">16</td><td class="na">地下一层比首层多出纵筋锚固</td><td>节点1</td></tr>
          <tr><td class="n">17</td><td class="na">墙柱纵筋插筋节点</td><td>墙柱插筋节点1</td></tr>
          <tr><td class="n">18</td><td class="na">桩上墙柱插筋节点</td><td>桩上墙柱插筋节点1</td></tr>
          <tr><td class="n">19</td><td class="na">梁上墙柱、板上墙柱底部构造</td><td>节点1</td></tr>
          <tr><td class="n">20</td><td class="na">剪力墙上边缘构件纵筋构造</td><td>节点1</td></tr>
          <tr><td class="n">21</td><td class="na">墙柱纵筋顶层锚固节点</td><td>墙柱顶层锚固节点2</td></tr>
          <tr><td class="n">22</td><td class="na">墙柱纵筋楼层变截面锚固节点</td><td>墙柱楼层变截面节点2</td></tr>
          <tr><td class="n">23</td><td class="na">纵向钢筋弯钩与机械锚固形式</td><td>节点5</td></tr>
          <tr><td class="n">24</td><td class="na">框架柱顶遇预制柱纵筋锚固构造</td><td>节点1</td></tr>
          <tr><td class="n">25</td><td class="na">框架柱顶遇预制柱纵筋连接构造</td><td>节点1</td></tr>
          <tr><td class="n">26</td><td class="na">框架柱底遇预制柱纵筋连接构造</td><td>节点1</td></tr>
        </tbody>
      </table>
      <div class="diagram">
        <div class="diagram-t">节点设置示意图</div>
        <svg class="node-svg" viewBox="0 0 384 297">
          <rect width="384" height="297" fill="#000"/>
          <text x="193" y="29" class="nd-title">纵筋伸入基础底部弯折</text>
          <g stroke="#fff" stroke-width="1" fill="none">
            <path d="M121 54.500H183L188 43L191 54.500L192 64L197 54.500H258M150.500 54.500V161.500H73M234.500 54.500V161.500H311.500"/>
            <path d="M73 148V193L82 198L65 202L73 206V268M311.500 148V193L321 198L303 202L311.500 206V262M73 246.500H311.500M282.500 161.500V246.500"/>
            <path d="M278 157L286 165M278 242L286 251"/>
            <path d="M125 229H156M125 222V236M120 236L130 226M151 236L161 225"/>
          </g>
          <path d="M155.500 54V241.500H125M228 54V241.500H258" fill="none" stroke="#f00" stroke-width="2"/>
          <text class="nd-dbh" transform="translate(275 197) rotate(-90)">DBH</text>
          <text class="nd-a" x="140" y="226">a</text>
          <text class="nd-node" x="190" y="281">节点一</text>
          <rect x="151" y="285.500" width="77" height="3" fill="#0ff"/>
        </svg>
        <p class="diagram-p">规范算法：来源22G101-3第2-10页的“柱插筋在基础中锚固构造”节点；柱全部纵筋伸至基础底部弯折；弯折长度 a 取计算设置中数值。</p>
      </div>
      <div class="dlg-track"></div>
    </div>
    <div class="dlg-foot">
      <button class="btn-p">确定</button>
      <button class="btn-c">取消</button>
    </div>
    <span class="dlg-grip"></span>
  </section>
</div>
</body>
</html>
```
FILE: styles.css
```css
*{box-sizing:border-box}
html,body{margin:0;padding:0;background:#fff}
.defs{position:absolute}
body{font-family:"Noto Sans CJK SC","Noto Sans",sans-serif;font-size:12px;color:#333}
.app{position:relative;width:1920px;height:1080px;overflow:hidden;display:flex;flex-direction:column;background:#fff}
small{font-size:9px;color:#666}

/* title */
.titlebar{height:28px;display:flex;align-items:center;padding-left:3px;flex:none}
.logo{width:18px;height:18px;margin-right:21px}
.qa{width:18px;height:18px;margin-right:16px;flex:none}
.qs{margin-right:13px}
.qu{margin-right:1px}
.qf{margin-right:13px}
.qarrow{width:8px;margin-right:7px;font-size:9px;line-height:12px;color:#444;text-align:center}
.qarrow-g{color:#bbb;margin-right:10px}
.qarrow-m{margin-right:144px}
.title-text{font-size:12.62px;line-height:20px;white-space:nowrap;color:#333}
.winctl{margin-left:auto;display:flex;padding-right:13px;gap:23px}
.winctl svg{width:12px;height:12px}

/* menu */
.menubar{height:27px;display:flex;padding-left:22px;gap:26px;flex:none;position:relative}
.mi{font-size:13px;line-height:20px;padding-top:6px;height:27px;white-space:nowrap;color:#333}
.mi-on{color:#1f72e0;border-bottom:2px solid #1f72e0;padding:6px 3px 0;margin:0 -3px}
.menu-right{margin-left:auto;display:flex;align-items:center;padding-top:8px;padding-right:6px}
.topsearch{width:318px;height:17px;background:#f7f7f7;border:1px solid #e4e4e4;border-radius:2px;display:flex;align-items:center;overflow:hidden;position:relative}
.topsearch-t{white-space:nowrap;margin-left:-2px;line-height:15px;color:#222}
.ico-q{width:12px;height:12px;color:#aaa}
.topsearch .ico-q{position:absolute;right:8px;top:2px;background:#f7f7f7}
.avatar{width:16px;height:16px;margin-left:7px}
.uname{width:30px;line-height:16px;white-space:nowrap}
.mr-i{width:16px;height:16px;flex:none}
.mr-1{margin-left:11px}
.mr-2{margin-left:8px}
.help{font-size:14px;line-height:16px;margin-left:9px;width:18px;white-space:nowrap}
.help small{font-size:7px}
.mr-3{margin-left:6px}
.mr-4{margin-left:7px}

/* ribbon */
.ribbon{height:101px;display:flex;border-top:1px solid #efefef;padding-top:2px;flex:none}
.rg{display:flex;flex-direction:column;border-right:1px solid #dcdcdc;height:94px;padding-left:5px}
.rg-body{display:flex;height:76px;flex:none}
.rg-label{line-height:16px;text-align:center;margin-left:-5px;white-space:nowrap;padding-top:2px}
.rg-select{width:232px;padding-left:0}
.rg-rt{width:78px}.rg-sum{width:152px}.rg-civil{width:152px}.rg-rebar{width:198px}.rg-steel{width:114px}.rg-stage{width:282px}.rg-check{width:82px}.rg-report{width:70px}.rg-idx{width:59px}.rg-table{width:77px;}
.rb{display:flex;flex-direction:column;align-items:center;padding:0 5px;white-space:nowrap}
.rb span{line-height:16px;margin-top:6px}
.ri{width:32px;height:32px;margin-top:4px}
.ri-blue{color:#1f72e0}
.dis span{color:#bdbdbd}
.fx{font:italic 16px "Liberation Serif",serif;fill:#c6c6c6}
.sel{position:relative}
.sel-main{width:56px;display:flex;flex-direction:column;align-items:center}
.sel-arrow{width:22px;height:28px;margin-top:5px}
.sel-main span{margin-top:9px;line-height:16px}
.sel-col{display:flex;flex-direction:column;gap:8px;padding-top:5px;width:96px}
.sel-col2{width:80px;margin-left:1px}
.si{height:16px;line-height:16px;display:flex;align-items:center;gap:4px;white-space:nowrap}
.si svg{width:14px;height:14px;flex:none}
.si-prop{gap:5px}
.si-prop small{font-size:8px;margin-left:3px}
.si-dis{color:#c4c4c4}

/* options */
.optbar{height:32px;background:#f3fafd;border-top:1px solid #93c6f5;border-bottom:1px solid #b4cfe6;display:flex;align-items:center;flex:none;white-space:nowrap}
.dd{width:100px;height:30px;line-height:29px;padding-left:3px;border-right:1px solid #dfe7ec;position:relative}
.dd::after{content:"";position:absolute;right:8px;top:13px;border:3px solid transparent;border-top:4px solid #666}
.chk{width:14px;height:14px;border:1px solid #999;border-radius:2px;background:#fff;margin-left:11px}
.opt-t{margin-left:3px;margin-right:11px}
.opt-dis{color:#888;width:28px}
.inp{height:22px;line-height:20px;border:1px solid #d4dde3;border-radius:3px;background:#fff;padding-left:3px;position:relative}
.inp-dis{width:79px;background:#e6e6e6;color:#aaa;border-color:#ccc}
.deg{width:15px;color:#888;text-align:center;line-height:14px;align-self:flex-start;padding-top:8px}
.sel-box{width:58px;height:22px;line-height:20px;border:1px solid #d4dde3;border-radius:3px;background:#fff;padding-left:3px;position:relative}
.sel-box small{position:absolute;right:5px;top:0}
.opt-x{margin-left:11px;width:18px;color:#555}
.opt-y{margin-left:11px;width:17px;color:#555}
.inp-n{width:60px}
.spin{position:absolute;right:3px;top:1px;font-style:normal;font-size:7px;line-height:9px;color:#666}
.opt-mm{margin-left:1px;width:22px;color:#555}

/* main */
.main{height:821px;display:flex;flex:none;position:relative}
.nav{width:207px;padding-top:2px;border-right:1px solid #ccc;border-bottom:1px solid #ccc;height:821px;overflow:hidden;position:relative}
.phead{height:27px;background:#eee;display:flex;align-items:center;position:relative;flex:none}
.phead-p{height:30px}
.grip{width:8px;height:14px;margin-left:7px;flex:none}
.phead-t{margin-left:9px}
.pclose{width:10px;height:10px;position:absolute;right:8px;top:8px}
.phead-p .pclose{top:10px}
.nav-track{position:absolute;left:198px;top:41px;width:4px;height:254px;background:#eee;border-radius:2px}
.nv-h{height:42px;width:194px;margin-left:1px;background:#f6f7f9;display:flex;align-items:center;padding-left:11px;gap:14px;font-size:12px}
.nv-h svg{width:24px;height:24px;flex:none}
.nv-h-on{background:#e9ebef}
.nv-h-on span{color:#4a7fd6}
.nv-s{height:28px;line-height:28px;padding-left:22px;white-space:nowrap}
.nv-s-on{color:#1e88f0}

.midcol{width:290px;padding:2px 5px 0 4px;height:821px;display:flex;flex-direction:column;gap:4px;flex:none}
.panel{border:1px solid #ccc;border-top:0;position:relative;flex:none;width:281px}
.panel-list{height:377px}
.panel-prop{height:408px}
.panel .phead .grip{margin-left:6px;margin-right:9px}
.tab{height:100%;width:68px;line-height:27px;text-align:center;white-space:nowrap}
.phead-p .tab{line-height:30px}
.tab-on{background:#fff;color:#3b8ee8}
.ltool{display:flex;height:26px;margin:7px 0 0 10px;gap:9px}
.tb{width:32px;height:26px;background:#f5f5f5;border-radius:3px;display:flex;align-items:center;justify-content:center}
.tb svg{width:16px;height:16px}
.tb-new{width:45px;justify-content:flex-start;padding-left:8px;gap:8px}
.tb-dd{font-style:normal;font-size:8px;color:#888}
.tb-more{margin-left:16px;width:26px;border:1px solid #ddd}
.tb-more small{font-size:7px}
.lsearch{height:26px;margin:7px 8px 0 9px;background:#f5f5f5;border-radius:13px;display:flex;align-items:center;justify-content:space-between;padding:0 12px;color:#999}
.tree-h{height:20px;line-height:20px;margin-top:11px;padding-left:6px;white-space:nowrap}
.tree-h small{font-size:8px;margin-right:2px;color:#888}
.tree-i{height:21px;line-height:21px;padding-left:22px;margin-top:3px;margin-bottom:11px;white-space:nowrap;letter-spacing:.4px}
.tree-sel{display:inline-block;background:#c2d9f2;border-radius:3px;padding:0 5px 0 3px;height:21px}
.tree-i:last-child{margin-top:-7px}
.tree-i span{padding-left:3px}

.pr-head{display:flex;height:23px;margin-top:1px;width:268px;line-height:22px;background:#efefef;border-bottom:1px solid #ddd;text-align:center}
.pc1{width:101px;border-right:1px solid #ddd}
.pc2{width:126px;border-right:1px solid #ddd;font-weight:700}
.pc3{width:41px;border-right:1px solid #ddd}
.pr{height:25px;display:flex;align-items:center;padding-left:15px}
.pr-head + .pr{margin-top:1px}
.pl{width:86px;white-space:nowrap;overflow:hidden}
.pl-b{color:#1f72e0}
.pv{width:125px;height:21px;line-height:19px;border:1px solid #e0e0e0;padding-left:2px;white-space:nowrap;position:relative;background:#fff}
.pv-on{border-color:#3a86e8}
.more{position:absolute;right:3px;top:3px;width:15px;height:13px;text-align:center;border:1px solid #6aa5ec;border-radius:2px;background:#eaf3fd;color:#2a7de1;font:700 6px/11px "Liberation Sans",sans-serif;letter-spacing:1.200px;text-indent:1px;overflow:hidden}
.rd{width:8px;height:8px;border-radius:50%;background:#d4d4d4;border:1px solid #bbb;margin-left:17px}
.pr-grp{height:24px;line-height:24px;width:267px;background:#eee;padding-left:8px;white-space:nowrap;margin-top:-1px;margin-bottom:1px;position:relative;top:1px}
.pr-grp + .pr{margin-top:1px}
.pr-grp small{font-size:8px;margin-right:5px;color:#666}
.pr-track{position:absolute;left:272px;top:224px;width:4px;height:133px;background:#eee;border-radius:2px}
.btn-sec{font:inherit;color:#333;background:#fff;border:1px solid #ccc;border-radius:4px;height:24px;padding:0;margin:0}
.midcol .btn-sec{width:80px;margin-left:6px;margin-top:-1px;flex:none}

/* canvas */
.canvas{width:1143px;height:821px;position:relative;flex:none;background:#000}
.cad{display:block;width:1143px;height:821px}
.cad-num{font:19px "Liberation Sans",sans-serif;fill:#fff;letter-spacing:1px}
.cad-num2{font:20px "Liberation Sans",sans-serif;fill:#fff}
.cad-num3{font:17px "Liberation Sans",sans-serif;fill:#fff;letter-spacing:.3px}
.cad-y{font:12px "Liberation Sans",sans-serif;fill:#0d0;text-anchor:middle}
.bub text{font:16px "Liberation Sans",sans-serif;fill:#fff;text-anchor:middle;letter-spacing:-1px}
.vtool{position:absolute;left:1106px;top:0;width:33px;height:245px;background:#fff;border-radius:0 0 3px 3px;display:flex;flex-direction:column;align-items:center;padding-top:13px}
.vtool svg{width:20px;height:20px;flex:none;margin-top:9px}
.vtool svg:first-child{margin-top:0}
.vt-arrow{font-style:normal;font-size:8px;color:#555;line-height:8px;height:8px;margin-top:5px}
.vtool .vt-arrow + svg{margin-top:6px}
.vt-line{width:22px;height:1px;background:#777;margin-top:7px}
.vtool .vt-line + svg{margin-top:6px}
.v3d{font:700 7px "Liberation Sans",sans-serif;fill:#2a7de1}

/* display panel */
.disp{width:280px;height:821px;border-left:1px solid #ccc;border-right:1px solid #ccc;border-bottom:1px solid #ccc;display:flex;flex-direction:column;background:#fff;flex:none}
.phead-d{height:30px}
.phead-d .pclose{top:10px;right:9px}
.phead-t2{margin-left:10px}
.dtabs{display:flex;height:25px;padding:4px 0 0 2px;gap:3px;flex:none}
.dtab{width:60px;height:21px;line-height:20px;text-align:center;background:#dcdcdc;border-radius:3px 3px 0 0;white-space:nowrap}
.dtab-on{width:62px;background:#fff;border:1px solid #ccc;border-bottom:0;color:#3b8ee8;height:22px}
.dframe{margin:3px 2px 0 2px;width:275px;height:722px;border:1px solid #ddd;overflow:hidden;position:relative;flex:none}
.dt{border-collapse:collapse;table-layout:fixed;width:259px}
.dt th{font-weight:400;height:20px;padding:0;line-height:18px;border-right:1px solid #ddd;border-bottom:1px solid #ddd;white-space:nowrap}
.dt th:nth-child(1){width:133px}
.dt th:nth-child(2),.dt th:nth-child(3){width:63px}
.dt .th-on{background:#7fbaf8;color:#fff}
.dt td{height:21px;padding:0;border-right:1px solid #ddd;border-bottom:1px solid #ddd;text-align:center;line-height:19px;position:relative;white-space:nowrap}
.dt td.t-p,.dt td.t-c{text-align:left}
.t-p{padding-left:31px !important}
.t-c{padding-left:41px !important}
.t-c::before{content:"";position:absolute;left:18px;top:0;bottom:-1px;border-left:1px solid #ddd}
.t-c::after{content:"";position:absolute;left:18px;top:10px;width:16px;border-top:1px solid #ddd}
.t-p::before{content:"";position:absolute;left:9px;top:10px;width:4px;border-top:1px solid #ddd}
.minus{position:absolute;left:12px;top:4px;width:13px;height:13px;border:1px solid #888;border-radius:2px;background:#fff}
.minus::after{content:"";position:absolute;left:2px;top:5px;width:7px;height:1px;background:#555}
.cb{display:block;width:14px;height:14px;margin:0 auto;border:1px solid #999;border-radius:2px;position:relative;background:#fff}
.cb.on{background:#2f80e7;border-color:#2f80e7}
.cb.on::after{content:"";position:absolute;left:3px;top:1.500px;width:6px;height:8px;border:solid #fff;border-width:0 2px 2px 0;transform:rotate(40deg) skewX(-6deg)}
.cb.pt{border-color:#666}
.cb.pt::after{content:"";position:absolute;left:1px;top:1px;width:10px;height:10px;background:#8ebdf7}
.td-focus{outline:2px solid #808080;outline-offset:-2px}
.d-track{position:absolute;left:264px;top:105px;width:4px;height:530px;background:#eee;border-radius:2px}
.d-foot{flex:1;display:flex;justify-content:flex-end;padding:7px 8px 0 0}
.d-foot .btn-sec{width:88px;height:26px}

/* status */
.status{height:31px;background:#fdfdfd;display:flex;align-items:center;flex:none;position:relative;white-space:nowrap}
.st{position:relative;line-height:16px}
.st1{margin-left:2px;width:90px}
.st2{width:139px}
.st3{width:111px}
.st4{width:110px}
.sb{height:24px;border:1px solid #bbb;border-radius:3px;display:flex;align-items:center;justify-content:center;background:#fff;margin-right:5px;flex:none}
.sb svg{width:16px;height:16px}
.sb-s{width:24px}
.sb-w{width:36px}
.sb small{font-size:8px;margin-left:1px}
.sb-on{background:#e6f0fc;border-color:#3a86e8}
.st-exp{width:16px;height:16px;margin-left:9px;margin-right:3px}
.st5{width:144px}
.st-r{display:flex;align-items:center;gap:5px}
.st-warn{margin-left:auto}
.st-ok{margin-left:14px;margin-right:10px}
.dot{width:14px;height:14px;border-radius:50%;display:block;flex:none;color:#fff;font-style:normal;font-weight:700;text-align:center;line-height:14px}
.dot-o{background:#f79030}
.dot-g{background:#6fbf10}
.dot-g svg{display:block;width:14px;height:14px}

/* taskbar */
.taskbar{height:40px;display:flex;align-items:center;flex:none;border-top:1px solid #27476a;background:linear-gradient(90deg,#1a5e97 0,#2b7cb8 12%,#4a9bd0 35%,#4fa0d4 55%,#2a7ab8 75%,#195f9f 85%,#1a5a9a 100%);position:relative}
.orb{width:36px;height:36px;margin-left:9px;flex:none}
.orb svg{width:36px;height:36px;display:block}
.tk-dots{width:10px;height:30px;margin-left:12px;margin-right:9px;background:radial-gradient(circle,#0d2f4f 1px,transparent 1.500px) 0 0/5px 5px;flex:none}
.tk{width:58px;height:38px;margin-right:4px;border:1px solid #2a5d86;border-radius:2px;background:linear-gradient(180deg,rgba(255,255,255,.32),rgba(255,255,255,.12));display:flex;align-items:center;justify-content:center;flex:none}
.tk svg{width:30px;height:30px}
.tk-a{background:linear-gradient(180deg,rgba(255,255,255,.55),rgba(255,255,255,.28))}
.pdf{width:30px;height:30px;border-radius:5px;background:#a9591f;color:#f5d9b5;font:700 11px/30px "Liberation Sans",sans-serif;text-align:center;display:block}
.tray{margin-left:auto;display:flex;align-items:center;height:38px;color:#fff}
.tray-dots{width:10px;height:30px;margin-right:9px;background:radial-gradient(circle,#0d2f4f 1px,transparent 1.500px) 0 0/5px 5px}
.ti{width:16px;height:16px;margin-right:8px;flex:none}
.ti-s,.ti-h{margin-right:6px}
.ti-w{margin-right:5px}
.tq{font:700 12px "Liberation Sans",sans-serif;fill:#fff;text-anchor:middle}
.clock{width:72px;margin-left:2px;margin-right:13px;display:flex;flex-direction:column;align-items:center;line-height:17px;white-space:nowrap;padding-bottom:2px}
.actbtn{width:16px;height:14px;background:#fff;border-radius:1px;margin-right:11px;position:relative}
.actbtn i{position:absolute;left:6px;top:3px;border:4px solid transparent;border-left:5px solid #222}
.showdesk{width:15px;height:38px;border:1px solid #5c8db5;background:rgba(255,255,255,.15)}

/* dialog */
.dialog{position:absolute;left:511px;top:260px;width:1070px;height:640px;background:#fff;border:1px solid #a8a8a8;display:flex;flex-direction:column}
.dlg-title{height:39px;display:flex;align-items:center;justify-content:space-between;padding:0 13px 3px 11px;font-size:14px;flex:none}
.dlg-x{width:12px;height:12px}
.dlg-frame{width:1047px;height:555px;margin-left:10px;border:1px solid #c8c8c8;display:flex;overflow:hidden;flex:none}
.nt{border-collapse:collapse;table-layout:fixed;width:535px;flex:none;align-self:flex-start}
.nt th{height:20px;font-weight:400;background:#efefef;border:1px solid #d4d4d4;border-top:0;padding:0;line-height:18px}
.nt th.n{width:23px}
.nt th:nth-child(2){width:310px}
.nt th.th-blue{background:#7fbaf8;color:#fff;width:202px}
.nt td{height:21px;padding:0 0 2px 3px;border:1px solid #d4d4d4;line-height:17px;white-space:nowrap;background:#fff;position:relative}
.nt td.n{background:#f0f0f0;text-align:center;padding:0 0 2px}
.nt td.n-on{background:#7fbaf8;color:#fff}
.nt td.na{background:#fffee6}
.nt td.val-on{outline:2px solid #5a9eea;outline-offset:-2px}
.selected{background:#3a86e8;color:#fff;display:inline-block;line-height:15px}
.diagram{width:400px;height:400px;margin:50px 0 0 3px;border:1px solid #c8c8c8;padding:1px 7px 0 6px;flex:none;font-size:12px}
.diagram-t{margin-left:-2px;line-height:20px;color:#222}
.node-svg{display:block;width:384px;height:297px;margin-top:-1px}
.nd-title{font-size:22px;fill:#fff;text-anchor:middle;font-weight:300}
.nd-dbh{font:16px "Liberation Serif",serif;fill:#fff;text-anchor:middle}
.nd-a{font:14px "Liberation Sans",sans-serif;fill:#0f0;text-anchor:middle}
.nd-node{font-size:22px;fill:#0ff;text-anchor:middle;letter-spacing:2px}
.diagram-p{margin:7px 0 0;line-height:16px;width:372px;color:#444;letter-spacing:.05px}
.dlg-track{width:7px;height:474px;background:#e8e8e8;margin:11px 0 0 auto}
.dlg-foot{display:flex;justify-content:flex-end;gap:7px;padding:7px 12px 0 0}
.btn-p,.btn-c{font:inherit;width:79px;height:26px;border-radius:4px;padding:0}
.btn-p{background:#2f80e0;color:#fff;border:0}
.btn-c{background:#fff;color:#333;border:1px solid #ccc}
.dlg-grip{position:absolute;right:3px;bottom:2px;width:8px;height:8px;background:radial-gradient(circle,#888 .8px,transparent 1px) 0 0/3px 3px}
```
